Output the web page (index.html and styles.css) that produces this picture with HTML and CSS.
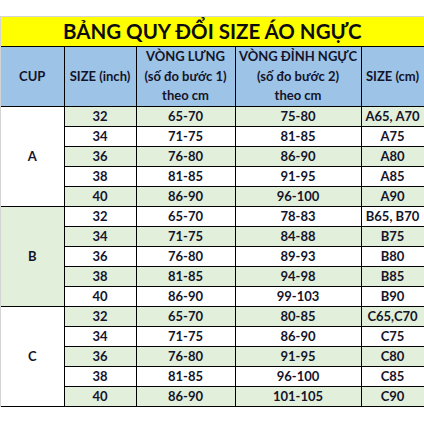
FILE: index.html
```html
<!DOCTYPE html>
<html>
<head>
<meta charset="utf-8">
<link rel="stylesheet" href="styles.css">
</head>
<body>
<div class="sheet">
<table class="chart">
<colgroup>
<col class="c1"><col class="c2"><col class="c3"><col class="c4"><col class="c5">
</colgroup>
<tr><td colspan="5" class="title">BẢNG QUY ĐỔI SIZE ÁO NGỰC</td></tr>
<tr class="head">
<td>CUP</td>
<td>SIZE (inch)</td>
<td>VÒNG LƯNG<br>(số đo bước 1)<br>theo cm</td>
<td>VÒNG ĐỈNH NGỰC<br>(số đo bước 2)<br>theo cm</td>
<td>SIZE (cm)</td>
</tr>
<tr class="g"><td rowspan="5" class="cup w">A</td><td>32</td><td>65-70</td><td>75-80</td><td>A65, A70</td></tr>
<tr class="w"><td>34</td><td>71-75</td><td>81-85</td><td>A75</td></tr>
<tr class="g"><td>36</td><td>76-80</td><td>86-90</td><td>A80</td></tr>
<tr class="w"><td>38</td><td>81-85</td><td>91-95</td><td>A85</td></tr>
<tr class="g"><td>40</td><td>86-90</td><td>96-100</td><td>A90</td></tr>
<tr class="w"><td rowspan="5" class="cup gc">B</td><td>32</td><td>65-70</td><td>78-83</td><td>B65, B70</td></tr>
<tr class="g"><td>34</td><td>71-75</td><td>84-88</td><td>B75</td></tr>
<tr class="w"><td>36</td><td>76-80</td><td>89-93</td><td>B80</td></tr>
<tr class="g"><td>38</td><td>81-85</td><td>94-98</td><td>B85</td></tr>
<tr class="w"><td>40</td><td>86-90</td><td>99-103</td><td>B90</td></tr>
<tr class="g"><td rowspan="5" class="cup w">C</td><td>32</td><td>65-70</td><td>80-85</td><td>C65,C70</td></tr>
<tr class="w"><td>34</td><td>71-75</td><td>86-90</td><td>C75</td></tr>
<tr class="g"><td>36</td><td>76-80</td><td>91-95</td><td>C80</td></tr>
<tr class="w"><td>38</td><td>81-85</td><td>96-100</td><td>C85</td></tr>
<tr class="g"><td>40</td><td>86-90</td><td>101-105</td><td>C90</td></tr>
</table>
</div>
</body>
</html>
```
FILE: styles.css
```css
html, body {
  margin: 0;
  padding: 0;
  background: #ffffff;
}
.sheet {
  margin-top: 16px;
  border-top: 1px solid #d4d4d4;
  border-left: 1px solid #d4d4d4;
  width: 423px;
}
.chart {
  border-collapse: collapse;
  table-layout: fixed;
  width: 423px;
  font-family: Lato, "Open Sans", sans-serif;
  font-weight: bold;
  color: #14142a;
  font-size: 13px;
}
.c1 { width: 63px; }
.c2 { width: 72px; }
.c3 { width: 99px; }
.c4 { width: 126px; }
.c5 { width: 63px; }
.chart td {
  border: 1px solid #000;
  text-align: center;
  padding: 0;
  height: 19px;
  line-height: 19px;
  white-space: nowrap;
  overflow: hidden;
}
.chart td:first-child { border-left: none; }
.chart td.title {
  background: #ffff00;
  border-top: none;
  height: 29px;
  line-height: 29px;
  font-size: 20.5px;
  color: #0d0d0d;
}
.head td {
  background: #9dc3e6;
  height: 58px;
  line-height: 19.5px;
  font-size: 13px;
}
.g td { background: #e2efda; }
.w td { background: #ffffff; }
.chart td.cup.w { background: #ffffff; }
.chart td.cup.gc { background: #e2efda; }
.chart td.cup { border-left: none; }
```
